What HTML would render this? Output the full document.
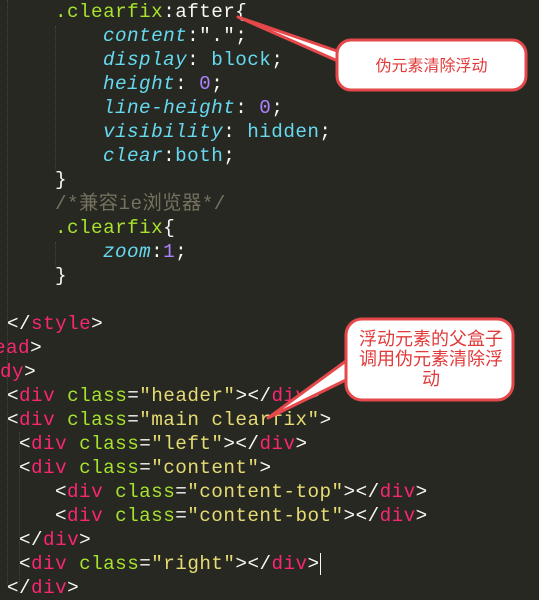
<!DOCTYPE html>
<html><head><meta charset="utf-8"><style>
body{margin:0;width:539px;height:586px;background:#272822;overflow:hidden;position:relative}
.l{position:absolute;white-space:pre;font-family:"Liberation Mono","Noto Sans CJK SC",monospace;font-size:19.3px;letter-spacing:0.45px;line-height:24px;color:#f8f8f2}
.s{color:#a6e22e}.p{color:#66d9ef;font-style:italic}.n{color:#ae81ff}.t{color:#f92672}.a{color:#a6e22e}.q{color:#e6db74}.c{color:#75715e}.v{color:#66d9ef}
.g{position:absolute;border-left:1px dotted #444;width:0}
.cn{position:absolute;font-family:"Noto Sans CJK SC",sans-serif;color:#e03a3a;text-align:center}
</style></head><body>
<div class="g" style="left:7px;top:0;height:586px"></div>
<div class="g" style="left:55px;top:26px;height:144px"></div>
<div class="g" style="left:55px;top:242px;height:24px"></div>
<div class="g" style="left:19px;top:432px;height:150px"></div>
<div class="l" style="left:55px;top:0"><span class="s">.clearfix</span>:after{</div>
<div class="l" style="left:103px;top:24px"><span class="p">content</span>:".";</div>
<div class="l" style="left:103px;top:48px"><span class="p">display</span>: <span class="v">block</span>;</div>
<div class="l" style="left:103px;top:72px"><span class="p">height</span>: <span class="n">0</span>;</div>
<div class="l" style="left:103px;top:96px"><span class="p">line-height</span>: <span class="n">0</span>;</div>
<div class="l" style="left:103px;top:120px"><span class="p">visibility</span>: <span class="v">hidden</span>;</div>
<div class="l" style="left:103px;top:144px"><span class="p">clear</span>:<span class="v">both</span>;</div>
<div class="l" style="left:55px;top:168px">}</div>
<div class="l c" style="left:55px;top:192px">/*兼容ie浏览器*/</div>
<div class="l" style="left:55px;top:216px"><span class="s">.clearfix</span>{</div>
<div class="l" style="left:103px;top:240px"><span class="p">zoom</span>:<span class="n">1</span>;</div>
<div class="l" style="left:55px;top:264px">}</div>
<div class="l" style="left:7px;top:312px">&lt;/<span class="t">style</span>&gt;</div>
<div class="l" style="left:-6px;top:336px"><span class="t">ead</span>&gt;</div>
<div class="l" style="left:-12px;top:360px"><span class="t">ody</span>&gt;</div>
<div class="l" style="left:7px;top:384px">&lt;<span class="t">div</span> <span class="a">class</span>=<span class="q">"header"</span>&gt;&lt;/<span class="t">div</span>&gt;</div>
<div class="l" style="left:7px;top:408px">&lt;<span class="t">div</span> <span class="a">class</span>=<span class="q">"main clearfix"</span>&gt;</div>
<div class="l" style="left:19px;top:432px">&lt;<span class="t">div</span> <span class="a">class</span>=<span class="q">"left"</span>&gt;&lt;/<span class="t">div</span>&gt;</div>
<div class="l" style="left:19px;top:456px">&lt;<span class="t">div</span> <span class="a">class</span>=<span class="q">"content"</span>&gt;</div>
<div class="l" style="left:55px;top:480px">&lt;<span class="t">div</span> <span class="a">class</span>=<span class="q">"content-top"</span>&gt;&lt;/<span class="t">div</span>&gt;</div>
<div class="l" style="left:55px;top:504px">&lt;<span class="t">div</span> <span class="a">class</span>=<span class="q">"content-bot"</span>&gt;&lt;/<span class="t">div</span>&gt;</div>
<div class="l" style="left:19px;top:528px">&lt;/<span class="t">div</span>&gt;</div>
<div class="l" style="left:19px;top:552px">&lt;<span class="t">div</span> <span class="a">class</span>=<span class="q">"right"</span>&gt;&lt;/<span class="t">div</span>&gt;<span style="border-left:1px solid #f8f8f2"></span></div>
<div class="l" style="left:7px;top:576px">&lt;/<span class="t">div</span>&gt;</div>
<svg style="position:absolute;left:0;top:0" width="539" height="586">
<g fill="#fff" stroke="#e5484a" stroke-width="3" stroke-linejoin="round">
<path d="M238,17 L340,52 L340,62 Z"/>
<rect x="337" y="40" width="189" height="50" rx="14"/>
<path d="M268,418 L350,358 L350,378 Z"/>
<rect x="346" y="319" width="167" height="81" rx="16"/>
</g>
<g fill="#fff"><rect x="339" y="50" width="6" height="14"/><rect x="348" y="356" width="6" height="24"/></g>
</svg>
<div class="cn" style="left:337px;top:53px;width:189px;font-size:16px;line-height:22px">伪元素清除浮动</div>
<div class="cn" style="left:356px;top:328px;width:150px;font-size:18px;line-height:20px">浮动元素的父盒子<br>调用伪元素清除浮<br>动</div>
</body></html>
